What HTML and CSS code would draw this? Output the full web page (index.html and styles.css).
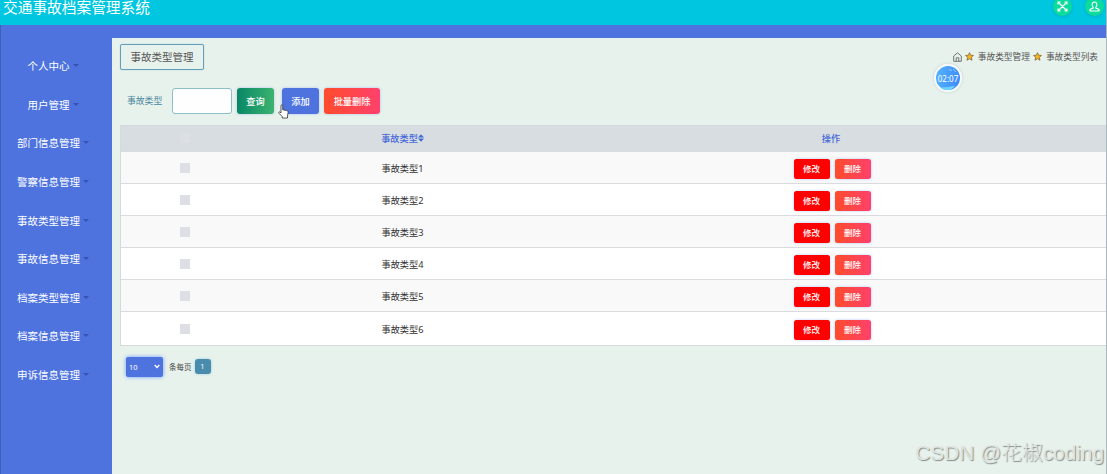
FILE: index.html
```html
<!DOCTYPE html>
<html lang="zh-CN">
<head>
<meta charset="utf-8">
<title>交通事故档案管理系统</title>
<link rel="stylesheet" href="styles.css">
</head>
<body>
<div class="app">
<header class="topbar">
  <h1 class="brand">交通事故档案管理系统</h1>
  <div class="tools">
    <span class="tool"><svg width="11" height="11" viewBox="0 0 11 11" fill="none" stroke="currentColor" stroke-width="1.1"><path d="M1.500 1.500l8 8M9.500 1.500l-8 8M1 3.500V1h2.500M7.500 1H10v2.500M10 7.500V10H7.500M3.500 10H1V7.500"/></svg></span>
    <span class="tool"><svg width="11" height="11" viewBox="0 0 11 11" fill="none" stroke="currentColor" stroke-width="1.1"><path d="M4.2 6.3C2.4 4.5 2.8 1 5.5 1s3.100 3.500 1.300 5.300v.8L10 8.400V10H1V8.400l3.200-1.300z"/></svg></span>
  </div>
</header>
<div class="body">
  <nav class="sidebar">
    <a class="item">个人中心<i class="caret"></i></a>
    <a class="item">用户管理<i class="caret"></i></a>
    <a class="item">部门信息管理<i class="caret"></i></a>
    <a class="item">警察信息管理<i class="caret"></i></a>
    <a class="item">事故类型管理<i class="caret"></i></a>
    <a class="item">事故信息管理<i class="caret"></i></a>
    <a class="item">档案类型管理<i class="caret"></i></a>
    <a class="item">档案信息管理<i class="caret"></i></a>
    <a class="item">申诉信息管理<i class="caret"></i></a>
  </nav>
  <main class="content">
    <div class="heading">
      <h2 class="title">事故类型管理</h2>
      <div class="crumbs">
        <svg width="9" height="10" viewBox="0 0 9 10" fill="none" stroke="#666" stroke-width=".9"><path d="M.7 4L4.500.8 8.300 4v5.300H.7zM3.200 9.300V5.800h2.600v3.500"/></svg>
        <svg class="star" width="9" height="9" viewBox="0 0 10 10"><path d="M5 .7l1.300 2.900 3.100.3L7 6l.8 3.200L5 7.500 2.200 9.200 3 6 .6 3.900l3.100-.3z"/></svg>
        <span>事故类型管理</span>
        <svg class="star" width="9" height="9" viewBox="0 0 10 10"><path d="M5 .7l1.300 2.900 3.100.3L7 6l.8 3.200L5 7.500 2.200 9.200 3 6 .6 3.900l3.100-.3z"/></svg>
        <span>事故类型列表</span>
      </div>
    </div>
    <form class="search">
      <label class="label" for="kind">事故类型</label>
      <input class="field" id="kind" type="text">
      <button class="btn query" type="button">查询</button>
      <button class="btn add" type="button">添加</button>
      <button class="btn danger wide" type="button">批量删除</button>
    </form>
    <div class="table">
      <div class="row head"><span><i class="check"></i></span><span class="sortable">事故类型<svg width="6" height="8" viewBox="0 0 6 8" fill="currentColor"><path d="M0 3.400L3 .3l3 3.100zM0 4.600h6L3 7.700z"/></svg></span><span>操作</span></div>
      <div class="row"><span><i class="check"></i></span><span>事故类型1</span><span class="ops"><button class="mini edit">修改</button><button class="mini danger">删除</button></span></div>
      <div class="row"><span><i class="check"></i></span><span>事故类型2</span><span class="ops"><button class="mini edit">修改</button><button class="mini danger">删除</button></span></div>
      <div class="row"><span><i class="check"></i></span><span>事故类型3</span><span class="ops"><button class="mini edit">修改</button><button class="mini danger">删除</button></span></div>
      <div class="row"><span><i class="check"></i></span><span>事故类型4</span><span class="ops"><button class="mini edit">修改</button><button class="mini danger">删除</button></span></div>
      <div class="row"><span><i class="check"></i></span><span>事故类型5</span><span class="ops"><button class="mini edit">修改</button><button class="mini danger">删除</button></span></div>
      <div class="row"><span><i class="check"></i></span><span>事故类型6</span><span class="ops"><button class="mini edit">修改</button><button class="mini danger">删除</button></span></div>
    </div>
    <div class="pager">
      <span class="size">10<svg width="6" height="5" viewBox="0 0 6 5" fill="none" stroke="currentColor" stroke-width="1.300"><path d="M.7 1L3 3.500 5.300 1"/></svg></span>
      <span>条每页</span>
      <span class="page">1</span>
    </div>
  </main>
</div>
<div class="timer"><svg class="waves" width="24" height="24" viewBox="0 0 24 24" fill="none"><path d="M4 21.500Q11 22 19 19.500Q16 24 12 24Q7 24 4 21.500z" fill="#6fd3ff"/><path d="M13 3.500l3 1M17 3l3 3" stroke="#8fc6ff"/></svg><span class="time">02:07</span></div>
<svg class="cursor" width="11" height="15" viewBox="0 0 11 15"><path d="M3 9V1.700c0-1.300 1.700-1.300 1.700 0v4l4 .9c1 .2 1.500.8 1.400 1.800L9.500 12v2H4.200v-1.500L1 9.300C.2 8.200 1.300 7.400 2.100 8.100z" fill="#fff" stroke="#333" stroke-width=".8"/></svg>
<div class="watermark">CSDN @花椒coding</div>
</div>
</body>
</html>
```
FILE: styles.css
```css
* { box-sizing: border-box; }
body { margin: 0; font-family: "Noto Sans", "Noto Sans CJK SC", sans-serif; }
.app { position: relative; width: 1107px; height: 474px; overflow: hidden; background: #4e73df; display: flex; flex-direction: column; border-right: 1px solid #aab9bf; }
.topbar { height: 25px; flex: none; background: #00c6df; display: flex; justify-content: space-between; padding: 0 2px 0 3px; }
.brand { margin: 0; height: 15px; font-size: 14.7px; line-height: 15px; font-weight: 400; color: #fff; white-space: nowrap; }
.tools { display: flex; gap: 13px; margin-top: -3px; }
.tool { width: 19px; height: 19px; border-radius: 50%; background: #0bdc9b; color: #fff; display: flex; align-items: center; justify-content: center; box-shadow: 0 1px 3px #0486a066; }
.body { flex: 1; display: flex; min-height: 0; }
.sidebar { width: 112px; padding-top: 21.500px; border-left: 1px solid #405fb8; }
.item { height: 38.6px; display: flex; align-items: center; justify-content: center; padding-right: 7px; gap: 3px; font-size: 10.5px; color: #fff; white-space: nowrap; }
.caret { border: 3px solid transparent; border-top-color: #3653b4; border-bottom: 0; }
.content { flex: 1; margin-top: 13px; background: #e8f2ec; padding: 6px 0 0 8px; }
.heading { display: flex; justify-content: space-between; height: 44px; }
.title { margin: 0; width: 84px; height: 26px; border: 1.500px solid #639fba; border-radius: 2px; font-size: 10.5px; line-height: 24px; font-weight: 400; text-align: center; color: #555; white-space: nowrap; box-shadow: 0 0 1px #639fba; }
.crumbs { display: flex; align-items: center; height: 25px; gap: 3.500px; padding-right: 8px; font-size: 8.700px; color: #555; white-space: nowrap; }
.star { fill: #f8b51e; stroke: #665026; stroke-width: .7; }
.search { height: 37px; display: flex; align-items: flex-start; padding-left: 7px; margin: 0; }
.label { width: 45px; font-size: 8.8px; line-height: 27px; color: #4d879e; white-space: nowrap; }
.field { width: 60px; height: 26px; border: 1px solid #8ebdcb; border-radius: 3px; background: #fdfefd; margin: 0 5px 0 0; padding: 0; }
.btn, .mini { border: 0; padding: 0; color: #fff; font-family: inherit; text-align: center; white-space: nowrap; box-shadow: 0 0 3px #88a9ee99; }
.btn { width: 37px; height: 26px; border-radius: 3px; font-size: 9.200px; font-weight: 500; }
.query { background: linear-gradient(90deg, #078765, #3cb371); margin-right: 8px; }
.add { background: #4e73df; margin-right: 5px; }
.danger { background: linear-gradient(90deg, #ff4b2b, #ff416c); }
.wide { width: 56px; }
.table { border: 1px solid #d5dadd; border-right: 0; font-size: 9.200px; color: #333; }
.row { display: grid; grid-template-columns: 128px 307px 1fr; height: 32.100px; border-bottom: 1px solid #d9dbdf; background: #fff; align-items: center; text-align: center; }
.row:nth-child(even) { background: #f9f9fa; }
.row:last-child { border-bottom: 0; }
.row.head { height: 26px; background: #d8dde1; color: #4568d8; font-weight: 500; }
.row.head > span { padding-bottom: 1px; }
.sortable { display: flex; align-items: center; justify-content: center; }
.check { display: block; width: 10px; height: 10px; margin: 0 auto; background: #dddfe4; }
.head .check { background: #dce0e5; }
.ops { display: flex; justify-content: center; gap: 5px; padding: 2px 0 0 2px; }
.mini { width: 36px; height: 20px; padding-bottom: 1px; border-radius: 2.500px; font-size: 8.500px; font-weight: 500; }
.edit { background: #f00; }
.pager { display: flex; align-items: center; height: 22px; margin: 10px 0 0 6px; font-size: 7.500px; color: #444; white-space: nowrap; }
.size { width: 37px; height: 20px; margin-right: 6px; padding: 0 3px; background: #4e73df; color: #fff; border-radius: 2px; display: flex; align-items: center; justify-content: space-between; box-shadow: 0 0 4px #719cff; }
.page { width: 16px; height: 15px; margin-left: 3px; line-height: 15px; text-align: center; border-radius: 3px; background: #4a8cad; color: #fff; box-shadow: 0 0 3px #9cceda; }
.timer { position: absolute; left: 934px; top: 64px; width: 28px; height: 28px; border: 2px solid #f7faff; border-radius: 50%; background: linear-gradient(100deg, #55b4ff, #3c88fa); box-shadow: 0 0 3px #91a5b077; display: grid; place-items: center; font-size: 8px; color: #fff; }
.waves, .time { grid-area: 1 / 1; }
.cursor { position: absolute; left: 278px; top: 104px; }
.watermark { position: absolute; right: 2px; bottom: 7px; font-family: "Liberation Sans", "Noto Sans CJK SC", sans-serif; font-size: 20.800px; line-height: 28px; font-weight: 300; color: #dfe5e2; text-shadow: 1px 1px 1px #858d89; white-space: nowrap; }
```
